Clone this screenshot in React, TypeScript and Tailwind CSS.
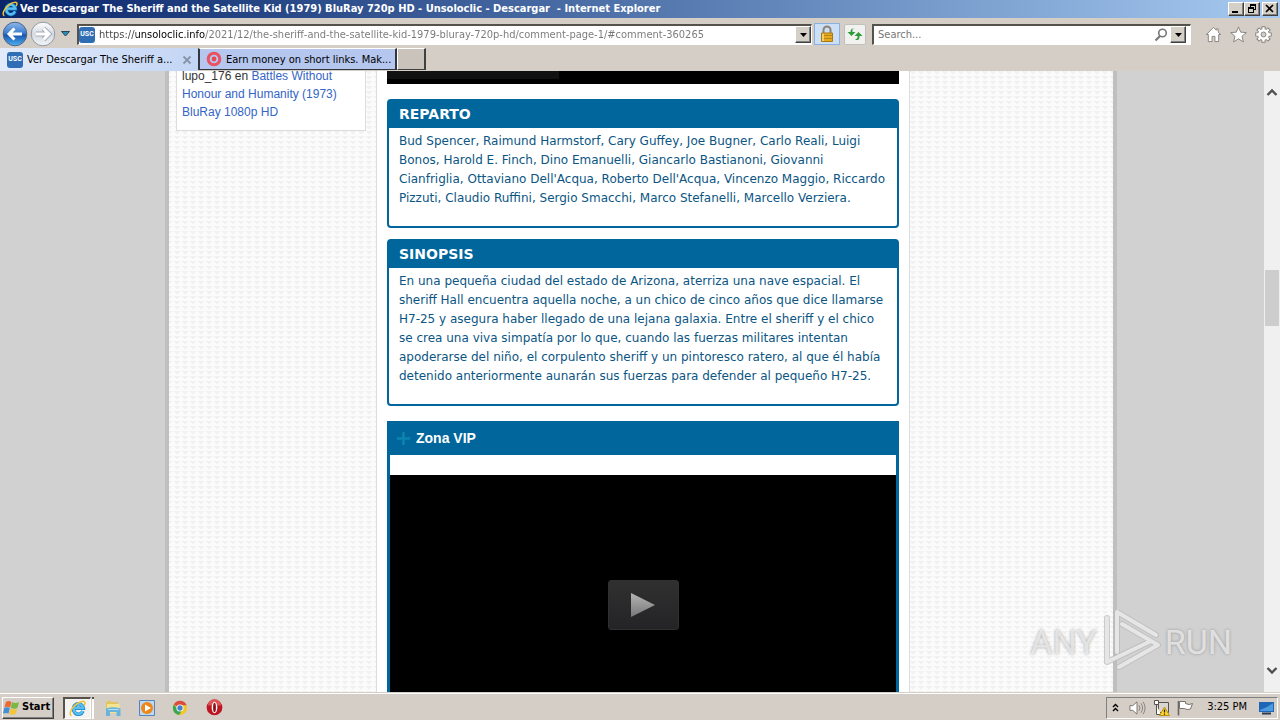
import type { ReactNode } from "react";

const ui = "font-['DejaVu_Sans_Condensed','DejaVu_Sans',sans-serif]";

function IeLogo({ className }: { className: string }) {
  return (
    <svg viewBox="0 0 20 20" className={className} aria-hidden="true">
      <path d="M16.4 13A5.8 6.2 0 1 1 16.800 9.800H6.600" fill="none" stroke="#1884c9" strokeWidth="4.2" />
      <path d="M16.200 13A5.600 6 0 1 1 16.600 9.600H6.600" fill="none" stroke="#58bff0" strokeWidth="2.8" />
      <path d="M3 18.400C-1 17 3 9 9 4.600C13 1.400 18.600 .4 18.800 3.400C18.800 4.600 18.200 5.400 17.600 6.200" fill="none" stroke="#f2c230" strokeWidth="1.800" />
    </svg>
  );
}

function Favicon() {
  return (
    <span className="flex h-4 w-4 shrink-0 items-center justify-center rounded-[3px] bg-[#2f6db5] font-['Roboto',sans-serif] text-[7px] leading-none font-bold text-white">
      USC
    </span>
  );
}

function NavArrow({ forward = false }: { forward?: boolean }) {
  return (
    <svg viewBox="0 0 26 26" className="h-[26px] w-[26px]" aria-hidden="true">
      <defs>
        <linearGradient id="navBlue" x1="0" y1="0" x2="0" y2="1">
          <stop offset="0" stopColor="#8fb8ea" />
          <stop offset=".45" stopColor="#3f7fd0" />
          <stop offset=".55" stopColor="#1a55ad" />
          <stop offset="1" stopColor="#4fb2f4" />
        </linearGradient>
        <linearGradient id="navGrey" x1="0" y1="0" x2="0" y2="1">
          <stop offset="0" stopColor="#fff" />
          <stop offset=".5" stopColor="#d5d9e0" />
          <stop offset="1" stopColor="#f2f4f7" />
        </linearGradient>
      </defs>
      <circle cx="13" cy="13" r="11.800" fill={forward ? "url(#navGrey)" : "url(#navBlue)"} stroke={forward ? "#9299a5" : "#4a6287"} />
      {forward ? (
        <path d="M6 13H19M13.500 7.500L19 13L13.500 18.500" fill="none" stroke="#a4abb8" strokeWidth="5" />
      ) : null}
      <path
        d={forward ? "M6 13H18.500M13.500 7.500L19 13L13.500 18.500" : "M20 13H7.500M12.500 7.500L7 13L12.500 18.500"}
        fill="none"
        stroke="#fff"
        strokeWidth="3"
      />
    </svg>
  );
}

function RaisedButton({ label, className, children }: { label: string; className: string; children: ReactNode }) {
  return (
    <button
      type="button"
      aria-label={label}
      className={`flex shrink-0 items-center justify-center border border-t-white border-r-[#404040] border-b-[#404040] border-l-white bg-[#d4d0c8] shadow-[inset_-1px_-1px_0_#808080] ${className}`}
    >
      {children}
    </button>
  );
}

function DownTriangle() {
  return (
    <svg viewBox="0 0 7 4" className="h-1 w-[7px]" aria-hidden="true">
      <path d="M0 0H7L3.500 4Z" fill="#000" />
    </svg>
  );
}

function TitleBar() {
  return (
    <header className="flex h-[18px] shrink-0 items-center bg-linear-to-r from-[#0a246a] to-[#a6caf0] pr-0.5 pl-0.5">
      <IeLogo className="h-4 w-4 shrink-0" />
      <h1 className="ml-0.5 flex-1 truncate text-[11px] leading-4 font-bold whitespace-pre text-white">
        Ver Descargar The Sheriff and the Satellite Kid (1979) BluRay 720p HD - Unsoloclic - Descargar  - Internet Explorer
      </h1>
      <RaisedButton label="Minimize" className="h-3.5 w-4">
        <svg viewBox="0 0 12 10" className="h-2.5 w-3" aria-hidden="true"><path d="M2 7H8V9H2Z" /></svg>
      </RaisedButton>
      <RaisedButton label="Restore" className="h-3.5 w-4">
        <svg viewBox="0 0 12 10" className="h-2.5 w-3" aria-hidden="true">
          <path d="M4 0H10V6H8V5H9V2H5V3H4ZM2 3H8V9H2ZM3 5V8H7V5Z" fillRule="evenodd" />
        </svg>
      </RaisedButton>
      <RaisedButton label="Close" className="ml-0.5 h-3.5 w-4">
        <svg viewBox="0 0 12 10" className="h-2.5 w-3" aria-hidden="true"><path d="M2 1L9 8M9 1L2 8" stroke="#000" strokeWidth="1.700" /></svg>
      </RaisedButton>
    </header>
  );
}

function Toolbar() {
  return (
    <div className="flex h-[30px] shrink-0 items-center pt-0.5 pr-2 pl-0.5">
      <button type="button" aria-label="Back"><NavArrow /></button>
      <button type="button" aria-label="Forward" className="ml-0.5"><NavArrow forward /></button>
      <button type="button" aria-label="Recent pages" className="ml-[5px]">
        <svg viewBox="0 0 9 6" className="h-1.5 w-[9px]" aria-hidden="true"><path d="M.5 .5H8.500L4.500 5Z" fill="#2b8fb0" stroke="#22465c" /></svg>
      </button>
      <div className="ml-[7px] flex h-[21px] flex-1 items-center border border-t-2 border-l-2 border-t-[#55524c] border-r-white border-b-white border-l-[#55524c] bg-white">
        <Favicon />
        <input
          type="text"
          aria-label="Address"
          defaultValue="https://unsoloclic.info/2021/12/the-sheriff-and-the-satellite-kid-1979-bluray-720p-hd/comment-page-1/#comment-360265"
          className="ml-1 h-[18px] min-w-0 flex-1 bg-[linear-gradient(90deg,#444_0_37px,#000_37px_106px,#777_106px)] bg-clip-text text-[11px] text-transparent outline-none"
        />
        <RaisedButton label="Show address bar suggestions" className="h-[17px] w-4"><DownTriangle /></RaisedButton>
      </div>
      <button type="button" aria-label="Security report" className="ml-0.5 flex h-[22px] w-[26px] items-center justify-center border border-[#8bb0e2] bg-[#cbdff6]">
        <svg viewBox="0 0 16 18" className="h-[18px] w-4" aria-hidden="true">
          <path d="M4.500 9V5A3.500 3.500 0 0 1 11.500 5V9" fill="none" stroke="#8c8370" strokeWidth="2" />
          <path d="M2.500 8H13.500V16.500H2.500Z" fill="#e7a91e" stroke="#a87812" />
          <path d="M3 10.500H13M3 13.500H13" stroke="#b98418" />
          <path d="M4 8.800V16" stroke="#ffdf75" strokeWidth="1.500" />
        </svg>
      </button>
      <button type="button" aria-label="Refresh" className="ml-1 flex h-[21px] w-[22px] items-center justify-center rounded-[2px] border border-[#c2c0ba] bg-[#f1f2ef]">
        <svg viewBox="0 0 16 14" className="h-3.5 w-4" aria-hidden="true">
          <path d="M8 1H5.500V5H8.500L4.500 9L.5 5H3.500Q3.500 1 8 1ZM8 13H10.500Q12.500 13 12.500 9H15.500L11.500 5L7.500 9H10.500V11Z" fill="#2d9b38" />
        </svg>
      </button>
      <div className="ml-1.5 flex h-[21px] w-[319px] items-center border border-t-2 border-l-2 border-t-[#55524c] border-r-white border-b-white border-l-[#55524c] bg-white pr-1 pl-1">
        <input type="text" aria-label="Search" placeholder="Search..." className="h-[18px] min-w-0 flex-1 text-[11px] outline-none placeholder:text-[#777]" />
        <button type="button" aria-label="Run search">
          <svg viewBox="0 0 14 14" className="h-3.5 w-3.5" aria-hidden="true">
            <circle cx="8.500" cy="5" r="3.800" fill="none" stroke="#777" strokeWidth="1.600" />
            <path d="M6 8L1.500 12.500" stroke="#777" strokeWidth="2.200" />
          </svg>
        </button>
        <RaisedButton label="Search options" className="ml-0.5 h-[17px] w-4"><DownTriangle /></RaisedButton>
      </div>
      <nav aria-label="Browser tools" className="ml-3.5 flex gap-2">
        <button type="button" aria-label="Home">
          <svg viewBox="0 0 18 18" className="h-[17px] w-[17px]" aria-hidden="true">
            <path d="M9 1.500L1.500 9H3.500V16.500H7.500V11H10.500V16.500H14.500V9H16.500L14 6.500V3H12V4.500Z" fill="#fff" stroke="#85827d" strokeLinejoin="round" />
          </svg>
        </button>
        <button type="button" aria-label="Favorites">
          <svg viewBox="0 0 18 18" className="h-[17px] w-[17px]" aria-hidden="true">
            <path d="M9 1L11.300 6.500L17.300 7L12.700 10.900L14.200 16.800L9 13.600L3.800 16.800L5.300 10.900L.7 7L6.700 6.500Z" fill="#fff" stroke="#85827d" strokeLinejoin="round" />
          </svg>
        </button>
        <button type="button" aria-label="Tools">
          <svg viewBox="0 0 18 18" className="h-[17px] w-[17px]" aria-hidden="true">
            <g stroke="#85827d" strokeWidth="4.400">
              <path d="M9 .3V17.700M.3 9H17.700M2.800 2.800L15.200 15.200M15.200 2.800L2.800 15.200" />
            </g>
            <circle cx="9" cy="9" r="6.600" fill="#85827d" />
            <g stroke="#fff" strokeWidth="2.400">
              <path d="M9 1.300V16.700M1.300 9H16.700M3.600 3.600L14.400 14.400M14.400 3.600L3.600 14.400" />
            </g>
            <circle cx="9" cy="9" r="5.700" fill="#fff" />
            <circle cx="9" cy="9" r="2.600" fill="#d4cec7" stroke="#85827d" />
          </svg>
        </button>
      </nav>
    </div>
  );
}

function TabBar() {
  return (
    <div className="flex h-[23px] shrink-0 items-stretch">
      <div className="flex w-[198px] items-center bg-linear-to-r from-[#e2ebfb] to-[#c3d5f5] pr-1.5 pl-[7px]">
        <Favicon />
        <span className="ml-1 flex-1 pt-0.5 text-[11px] whitespace-nowrap text-black">Ver Descargar The Sheriff a...</span>
        <button type="button" aria-label="Close tab">
          <svg viewBox="0 0 10 10" className="h-2.5 w-2.5" aria-hidden="true"><path d="M1.500 1.500L8.500 8.500M8.500 1.500L1.500 8.500" stroke="#8793a8" strokeWidth="1.800" /></svg>
        </button>
      </div>
      <div className="mb-px flex w-[199px] items-center border-t border-r-2 border-b border-l-2 border-t-white border-r-[#33363d] border-b-[#33363d] border-l-[#33363d] bg-[#b5c6ef] pl-1.5">
        <svg viewBox="0 0 16 16" className="h-4 w-4 shrink-0" aria-hidden="true">
          <circle cx="8" cy="8" r="5.800" fill="none" stroke="#e95260" strokeWidth="3" />
          <circle cx="8" cy="8" r="2.400" fill="#ec4654" />
        </svg>
        <span className="ml-1 pt-0.5 text-[11px] whitespace-nowrap text-black">Earn money on short links. Mak...</span>
      </div>
      <button type="button" aria-label="New tab" className="mb-px w-[29px] border-t border-r-2 border-b border-l border-t-white border-r-[#404040] border-b-[#404040] border-l-white bg-[#c9c3bc]" />
    </div>
  );
}

function InfoBox({ title, children }: { title: string; children: ReactNode }) {
  return (
    <section className="rounded-sm border-2 border-[#00669b] bg-white font-['DejaVu_Sans',sans-serif]">
      <h2 className="bg-[#00669b] px-2.5 pt-1 pb-1 text-[14px] leading-[19px] font-bold text-white">{title}</h2>
      <div className="px-2.5 pt-1 pb-[18px] text-[12px] leading-[19px] text-[#0b5583]">{children}</div>
    </section>
  );
}

const cast = [
  "Bud Spencer, Raimund Harmstorf, Cary Guffey, Joe Bugner, Carlo Reali, Luigi",
  "Bonos, Harold E. Finch, Dino Emanuelli, Giancarlo Bastianoni, Giovanni",
  "Cianfriglia, Ottaviano Dell'Acqua, Roberto Dell'Acqua, Vincenzo Maggio, Riccardo",
  "Pizzuti, Claudio Ruffini, Sergio Smacchi, Marco Stefanelli, Marcello Verziera.",
];

const synopsis = [
  "En una pequeña ciudad del estado de Arizona, aterriza una nave espacial. El",
  "sheriff Hall encuentra aquella noche, a un chico de cinco años que dice llamarse",
  "H7-25 y asegura haber llegado de una lejana galaxia. Entre el sheriff y el chico",
  "se crea una viva simpatía por lo que, cuando las fuerzas militares intentan",
  "apoderarse del niño, el corpulento sheriff y un pintoresco ratero, al que él había",
  "detenido anteriormente aunarán sus fuerzas para defender al pequeño H7-25.",
];

function Lines({ lines }: { lines: string[] }) {
  return <p>{lines.map((line) => <span key={line} className="block whitespace-nowrap">{line}</span>)}</p>;
}

function PageContent() {
  return (
    <div className="flex min-w-0 flex-1 overflow-hidden bg-[#d1d1d1] pl-[18px]">
      <div className="flex-1" />
      <div className="flex w-[952px] border-x-4 border-[#bfbfbf] bg-[#fbfbfb] bg-[linear-gradient(135deg,#f1f1f1_25%,transparent_25%),linear-gradient(225deg,#f1f1f1_25%,transparent_25%)] bg-[length:8px_5px]">
        <aside className="w-[207px] shrink-0 px-[7px] font-['Liberation_Sans',sans-serif] text-[12px] leading-[18px]">
          <div className="-mt-[5px] w-[190px] border border-[#dcdcdc] bg-white px-[5px] pb-[9px] text-[#333]">
            lupo_176 en <a href="#battles" className="text-[#3465c8]">Battles Without<br />Honour and Humanity (1973)<br />BluRay 1080p HD</a>
          </div>
        </aside>
        <main className="flex w-[534px] shrink-0 flex-col border-x border-[#d8dde0] bg-white px-2.5">
          <div className="h-[13px] shrink-0 bg-black">
            <div className="h-2 w-[172px] bg-[#111]" />
          </div>
          <div className="mt-[15px] flex flex-col gap-[11px]">
            <InfoBox title="REPARTO"><Lines lines={cast} /></InfoBox>
            <InfoBox title="SINOPSIS"><Lines lines={synopsis} /></InfoBox>
          </div>
          <section className="mt-[15px] flex flex-1 flex-col border-x-3 border-[#00669b]">
            <h2 className="flex h-[34px] shrink-0 items-center bg-[#00669b] pl-[7px] font-['Liberation_Sans',sans-serif] text-[14px] font-bold text-white">
              <svg viewBox="0 0 13 13" className="mr-1.5 h-[13px] w-[13px]" aria-hidden="true"><path d="M6.500 0V13M0 6.500H13" stroke="#0b84b0" strokeWidth="2.600" /></svg>
              Zona VIP
            </h2>
            <div className="mt-5 flex-1 bg-black pt-[105px]">
              <button type="button" aria-label="Play video" className="mx-auto flex h-[50px] w-[71px] items-center justify-center rounded-[3px] border border-[#303030] bg-linear-to-b from-[#303031] to-[#242426]">
                <svg viewBox="0 0 24 24" className="h-6 w-6" aria-hidden="true">
                  <defs><linearGradient id="play" x1="0" y1="0" x2="0" y2="1"><stop stopColor="#b5b5b5" /><stop offset="1" stopColor="#777" /></linearGradient></defs>
                  <path d="M0 0L24 12L0 24Z" fill="url(#play)" />
                </svg>
              </button>
            </div>
          </section>
        </main>
      </div>
      <div className="flex-1" />
    </div>
  );
}

function Chevron({ down = false }: { down?: boolean }) {
  return (
    <svg viewBox="0 0 12 8" className="h-2 w-3" aria-hidden="true">
      <path d={down ? "M1.500 1L6 5.500L10.500 1" : "M1.500 7L6 2.500L10.500 7"} fill="none" stroke="#505050" strokeWidth="2.400" />
    </svg>
  );
}

function ScrollBar() {
  return (
    <div className="flex w-4 shrink-0 flex-col items-center bg-[#f0f0f0] pt-[17px] pb-[17px]">
      <button type="button" aria-label="Scroll up"><Chevron /></button>
      <div className="flex w-full flex-1 flex-col">
        <div className="flex-[171]" />
        <div className="h-14 w-3.5 self-center bg-[#cdcdcd]" />
        <div className="flex-[335]" />
      </div>
      <button type="button" aria-label="Scroll down"><Chevron down /></button>
    </div>
  );
}

function Watermark() {
  const mark = "M12 13V57L56 36M22 47V7L61 30M27 19L63 40L24 62";
  return (
    <div className="pointer-events-none absolute right-12 bottom-[18px] flex h-16 items-center gap-1 font-['Roboto',sans-serif] text-[34px] leading-none text-[#f0f0f0]/80 [text-shadow:0_0_3px_#777a]">
      <span>ANY</span>
      <svg viewBox="6 5 60 64" className="h-16 w-[60px]" fill="none" aria-hidden="true">
        <path d={mark} stroke="#b8b8b8" strokeOpacity=".7" strokeWidth="6" strokeLinecap="round" strokeLinejoin="round" />
        <path d={mark} stroke="#e6e6e6" strokeWidth="4" strokeLinecap="round" strokeLinejoin="round" />
      </svg>
      <span>RUN</span>
    </div>
  );
}

function WindowsFlag() {
  return (
    <svg viewBox="0 0 18 16" className="h-[15px] w-[17px] shrink-0" aria-hidden="true">
      <path d="M3 2Q6 0 9 2L7.500 8Q4.500 6.500 1.500 8Z" fill="#ed6a32" />
      <path d="M9.600 2.500Q13 4 17 2.500L15.300 8.500Q12 10 8.100 8.500Z" fill="#79b943" />
      <path d="M1.300 8.600Q4.300 7.100 7.200 8.600L5.800 14.500Q3 13 0 14.500Z" fill="#4190d8" />
      <path d="M7.900 9.200Q11.500 10.700 15 9.200L13.500 15Q10 16.500 6.400 15Z" fill="#f4c53a" />
    </svg>
  );
}

function TaskBar() {
  return (
    <footer className="flex h-7 shrink-0 items-center border-t border-[#d4d0c8] bg-[#d4cec7] pr-0.5 pl-0.5 shadow-[inset_0_1px_0_#fff]">
      <button type="button" className="mt-0.5 flex h-[22px] w-[52px] items-center gap-0.5 border border-t-white border-r-[#404040] border-b-[#404040] border-l-white text-[11px] font-bold text-black shadow-[inset_-1px_-1px_0_#808080]">
        <WindowsFlag />Start
      </button>
      <div className="mt-0.5 ml-[9px] flex items-center">
        <button type="button" aria-label="Internet Explorer" className="flex h-[22px] w-[28px] items-center justify-center border-t-2 border-r border-b border-l-2 border-t-[#55524c] border-r-white border-b-white border-l-[#55524c] bg-[#f4f3f1]">
          <IeLogo className="h-[17px] w-[17px]" />
        </button>
        <span className="ml-px h-[22px] w-0.5 border-t-2 border-[#55524c] bg-white" />
        <button type="button" aria-label="File Explorer" className="ml-2.5">
          <svg viewBox="0 0 18 18" className="h-[18px] w-[18px]" aria-hidden="true">
            <path d="M2 3L6 1.500L7 3H14V14H2Z" fill="#e3c55f" />
            <path d="M3 5H15.500V14H3Z" fill="#f4e391" />
            <path d="M2 9.500Q9 7 16.500 9.500V17H12.500V13H6V17H2Z" fill="#67b5dc" />
            <path d="M4 10.500H14.500" stroke="#b6e1f5" />
          </svg>
        </button>
        <button type="button" aria-label="Media Player" className="ml-4">
          <svg viewBox="0 0 18 18" className="h-[18px] w-[18px]" aria-hidden="true">
            <path d="M1.500 1.500H16.500V16.500H1.500Z" fill="#bcd8f2" stroke="#5385b8" />
            <circle cx="9" cy="9" r="6" fill="#ee8717" />
            <path d="M7 5.500L13 9L7 12.500Z" fill="#fff" />
          </svg>
        </button>
        <button type="button" aria-label="Chrome" className="ml-4">
          <svg viewBox="0 0 18 18" className="h-4 w-4" aria-hidden="true">
            <circle cx="9" cy="9" r="8" fill="#f3c824" />
            <path d="M9 9L2.100 5A8 8 0 0 1 16.500 6H9Z" fill="#db4b3e" />
            <path d="M2.100 5A8 8 0 0 0 8 17L11 12L7 11Z" fill="#3ca657" />
            <circle cx="9" cy="9" r="4" fill="#fff" /><circle cx="9" cy="9" r="3" fill="#4680d3" />
          </svg>
        </button>
        <button type="button" aria-label="Opera" className="ml-[18px]">
          <svg viewBox="0 0 18 18" className="h-[17px] w-[17px]" aria-hidden="true">
            <circle cx="9" cy="9" r="8.300" fill="#bd1620" /><path d="M2 7A7 7 0 0 1 16 7Z" fill="#dc5358" />
            <ellipse cx="9" cy="9" rx="3" ry="6" fill="#fff" /><ellipse cx="9" cy="9" rx="1.500" ry="5" fill="#8d1119" />
          </svg>
        </button>
      </div>
      <div className="mt-0.5 ml-auto flex h-[22px] w-[172px] items-center border border-t-[#808080] border-r-white border-b-white border-l-[#808080] pr-0.5 pl-[5px]">
        <button type="button" aria-label="Show hidden icons">
          <svg viewBox="0 0 7 9" className="h-[9px] w-[7px]" aria-hidden="true"><path d="M1 4L3.500 1.500L6 4M1 8L3.500 5.500L6 8" fill="none" stroke="#000" strokeWidth="1.400" /></svg>
        </button>
        <button type="button" aria-label="Volume" className="ml-2.5">
          <svg viewBox="0 0 18 16" className="h-4 w-[17px]" aria-hidden="true">
            <path d="M1 5.500H4L8.500 1.500V14.500L4 10.500H1Z" fill="#fff" stroke="#77736d" />
            <path d="M10.500 5Q12.500 8 10.500 11M12.700 3Q16 8 12.700 13M15 1.500Q19 8 15 14.500" fill="none" stroke="#858078" />
          </svg>
        </button>
        <button type="button" aria-label="Network" className="ml-[7px]">
          <svg viewBox="0 0 17 16" className="h-4 w-[17px]" aria-hidden="true">
            <path d="M5.500 2.500H15.500V12.500H5.500Z" fill="#d9d6d1" stroke="#55524d" />
            <path d="M1.500 .5H5.500V4.500H1.500ZM3.500 5V14.500H8" fill="#fff" stroke="#55524d" />
            <path d="M11.500 7L16.500 15.500H6.500Z" fill="#ffd82f" stroke="#be8e10" /><path d="M11.500 9.500V12.500M11.500 13.500V14.700" stroke="#222" strokeWidth="1.300" />
          </svg>
        </button>
        <button type="button" aria-label="Action Center" className="ml-[7px]">
          <svg viewBox="0 0 17 16" className="h-4 w-[17px]" aria-hidden="true">
            <path d="M1.500 1V15.500" stroke="#6b6762" strokeWidth="1.600" /><path d="M2.500 1.500H8.500V3.500Q12 5.500 15.500 3.500L13.500 9Q10 10.500 7.500 8.500H2.500Z" fill="#fff" stroke="#77736d" />
          </svg>
        </button>
        <time className="ml-auto text-[11px] whitespace-nowrap text-black">3:25 PM</time>
        <button type="button" aria-label="Show desktop" className="ml-3">
          <svg viewBox="0 0 16 14" className="h-3.5 w-4" aria-hidden="true">
            <path d="M0 1H15V11H0Z" fill="#1f65b6" /><path d="M1 9Q8 7 14 2V10H1Z" fill="#4b9bdf" /><path d="M3 12.500H12" stroke="#263b55" strokeWidth="2" />
          </svg>
        </button>
      </div>
    </footer>
  );
}

export default function App() {
  return (
    <div className={`flex h-screen flex-col overflow-hidden bg-[#d4cec7] ${ui}`}>
      <TitleBar />
      <Toolbar />
      <TabBar />
      <div className="relative flex min-h-0 flex-1">
        <PageContent />
        <ScrollBar />
        <Watermark />
      </div>
      <TaskBar />
    </div>
  );
}
